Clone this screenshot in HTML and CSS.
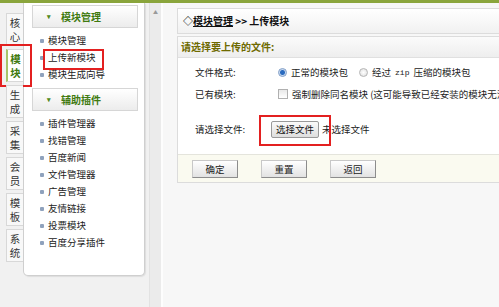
FILE: index.html
```html
<!DOCTYPE html>
<html lang="zh-CN">
<head>
<meta charset="utf-8">
<title>上传模块</title>
<link rel="stylesheet" href="styles.css">
</head>
<body>
<div class="topline"></div>
<div class="layout">
  <aside class="side">
    <nav class="tabs">
      <div class="tab">核<br>心</div>
      <div class="tab active">模<br>块</div>
      <div class="tab">生<br>成</div>
      <div class="tab">采<br>集</div>
      <div class="tab">会<br>员</div>
      <div class="tab">模<br>板</div>
      <div class="tab">系<br>统</div>
    </nav>
    <div class="menu">
      <div class="mhead"><span class="caret">▾</span>模块管理</div>
      <ul class="items first">
        <li>模块管理</li>
        <li class="marked">上传新模块</li>
        <li>模块生成向导</li>
      </ul>
      <div class="mhead"><span class="caret">▾</span>辅助插件</div>
      <ul class="items">
        <li>插件管理器</li>
        <li>找错管理</li>
        <li>百度新闻</li>
        <li>文件管理器</li>
        <li>广告管理</li>
        <li>友情链接</li>
        <li>投票模块</li>
        <li>百度分享插件</li>
      </ul>
    </div>
  </aside>
  <div class="scroll"><span class="arrow">▲</span></div>
  <main class="main">
    <div class="crumb">◇<u>模块管理</u> &gt;&gt; 上传模块</div>
    <div class="formbox">
      <div class="fhead">请选择要上传的文件:</div>
      <div class="fbody">
        <div class="row">
          <span class="label">文件格式:</span>
          <span class="opt"><span class="radio on"></span>正常的模块包</span>
          <span class="opt"><span class="radio"></span>经过 <span class="mono">zip</span> 压缩的模块包</span>
        </div>
        <div class="row">
          <span class="label">已有模块:</span>
          <span class="opt"><span class="check"></span>强制删除同名模块 (这可能导致已经安装的模块无法正常使用)</span>
        </div>
        <div class="row filerow">
          <span class="label flabel">请选择文件:</span>
          <span class="filebtn">选择文件</span><span class="nofile">未选择文件</span>
        </div>
      </div>
      <div class="fbar">
        <span class="btn">确定</span>
        <span class="btn">重置</span>
        <span class="btn">返回</span>
      </div>
    </div>
  </main>
</div>
</body>
</html>
```

FILE: styles.css
```css
* { box-sizing: border-box; }
html, body { margin: 0; padding: 0; }
body {
  width: 499px;
  height: 307px;
  overflow: hidden;
  font-family: "Noto Sans CJK SC", "Liberation Sans", sans-serif;
  font-size: 9.5px;
  color: #222;
  background: #f7f7f7;
}
.topline {
  height: 3px;
  background: #8aa53c;
}
.layout {
  display: flex;
  height: 304px;
}
.side {
  width: 150px;
  flex: none;
  display: flex;
  background: #f1f1f1;
  border-right: 1px solid #e2e2e2;
}
.tabs {
  width: 23px;
  flex: none;
  padding: 10px 0 0 6px;
  display: flex;
  flex-direction: column;
  gap: 3px;
}
.tab {
  position: relative;
  height: 33px;
  width: 17px;
  background: #f8f8f8;
  border: 1px solid #d8d8d8;
  border-right: none;
  color: #333;
  font-size: 10.5px;
  line-height: 14px;
  text-align: center;
  padding-top: 2px;
}
.tab.active {
  background: #fff;
  border-left: 2px solid #a8c46a;
  color: #3f7a10;
  font-weight: bold;
}
.tab.active::after {
  content: "";
  position: absolute;
  left: -8px;
  right: -9px;
  top: -6px;
  bottom: -6px;
  border: 2px solid #e32020;
}
.menu {
  width: 122px;
  flex: none;
  height: 273px;
  background: #fff;
  border: 1px solid #cfcfcf;
  border-top: none;
  border-radius: 0 0 5px 5px;
  padding: 2px 6px 0 8px;
  box-shadow: 1px 1px 1px #ddd;
}
.mhead {
  height: 23px;
  border: 1px solid #d6d6d6;
  background: linear-gradient(#ffffff, #ececec);
  color: #3f7a10;
  font-weight: bold;
  font-size: 10px;
  line-height: 21px;
  padding-left: 14px;
}
.caret {
  display: inline-block;
  font-size: 7px;
  color: #4f8a20;
  width: 14px;
  vertical-align: top;
}
.items {
  list-style: none;
  margin: 0;
  padding: 4px 0 5px 8px;
}
.items li {
  position: relative;
  height: 17px;
  line-height: 17px;
  padding-left: 8px;
  color: #222;
}
.items li::before {
  content: "";
  position: absolute;
  left: 0;
  top: 7px;
  width: 4px;
  height: 4px;
  background: #8fa2bd;
  border-radius: 1px;
}
.items li.marked::after {
  content: "";
  position: absolute;
  left: 3px;
  top: 0;
  width: 57px;
  height: 17px;
  border: 2px solid #e32020;
}
.scroll {
  width: 13px;
  flex: none;
  background: #ebebeb;
  border-right: 2px solid #fdfdfd;
}
.arrow {
  display: block;
  font-size: 5px;
  color: #999;
  text-align: center;
  margin-top: 5px;
}
.main {
  flex: 1;
  min-width: 0;
  padding: 5px 0 0 14px;
  overflow: hidden;
}
.crumb {
  width: 340px;
  height: 26px;
  border: 1px solid #dcdcdc;
  border-right: none;
  background: linear-gradient(#ffffff, #f1f1f1);
  font-weight: bold;
  font-size: 10px;
  line-height: 24px;
  padding-left: 5px;
  color: #111;
}
.crumb u { text-decoration: underline; }
.formbox {
  margin-top: 2px;
  width: 340px;
  border: 1px solid #dcdcdc;
  border-right: none;
  background: #fff;
}
.fhead {
  height: 21px;
  line-height: 20px;
  background: linear-gradient(#fbfbfb, #eeeeee);
  border-bottom: 1px solid #e0e0e0;
  color: #6e6a00;
  font-weight: bold;
  font-size: 10px;
  padding-left: 3px;
}
.fbody {
  padding: 3px 0 0 0;
  height: 96px;
}
.row {
  display: flex;
  align-items: center;
  height: 22px;
  white-space: nowrap;
}
.label {
  width: 100px;
  flex: none;
  padding-left: 17px;
}
.opt {
  display: flex;
  align-items: center;
  margin-right: 11px;
}
.radio {
  width: 9px;
  height: 9px;
  border-radius: 50%;
  border: 1px solid #b5b5b5;
  background: radial-gradient(#fff, #ddd);
  margin-right: 4px;
}
.radio.on {
  background: radial-gradient(circle, #2a6bbf 0, #2a6bbf 2px, #c5d9f0 3px, #eef 4px);
  border-color: #7d9cc6;
}
.check {
  width: 10px;
  height: 10px;
  border: 1px solid #b0b0b0;
  background: linear-gradient(#e8e8e8, #fff);
  margin-right: 4px;
}
.mono {
  font-family: "Liberation Mono", monospace;
  font-size: 8px;
  margin: 0 4px;
}
.filerow {
  margin-top: 13px;
}
.flabel { width: 93px; }
.filebtn {
  position: relative;
  height: 17px;
  line-height: 15px;
  padding: 0 4px;
  border: 1px solid #999;
  border-radius: 2px;
  background: linear-gradient(#fafafa, #dedede);
  color: #111;
}
.filebtn::after {
  content: "";
  position: absolute;
  left: -13px;
  right: -13px;
  top: -7px;
  bottom: -9px;
  border: 2px solid #e32020;
}
.nofile {
  margin-left: 3px;
  color: #222;
}
.fbar {
  height: 28px;
  background: #fafaf0;
  border-top: 1px solid #e4e4dc;
  display: flex;
  align-items: center;
  gap: 23px;
  padding-left: 14px;
}
.btn {
  width: 46px;
  height: 18px;
  line-height: 16px;
  text-align: center;
  border: 1px solid #c8c8c8;
  border-right-color: #8c8c8c;
  border-bottom-color: #8c8c8c;
  background: linear-gradient(#ffffff, #e2e2e2);
  color: #222;
}
```
